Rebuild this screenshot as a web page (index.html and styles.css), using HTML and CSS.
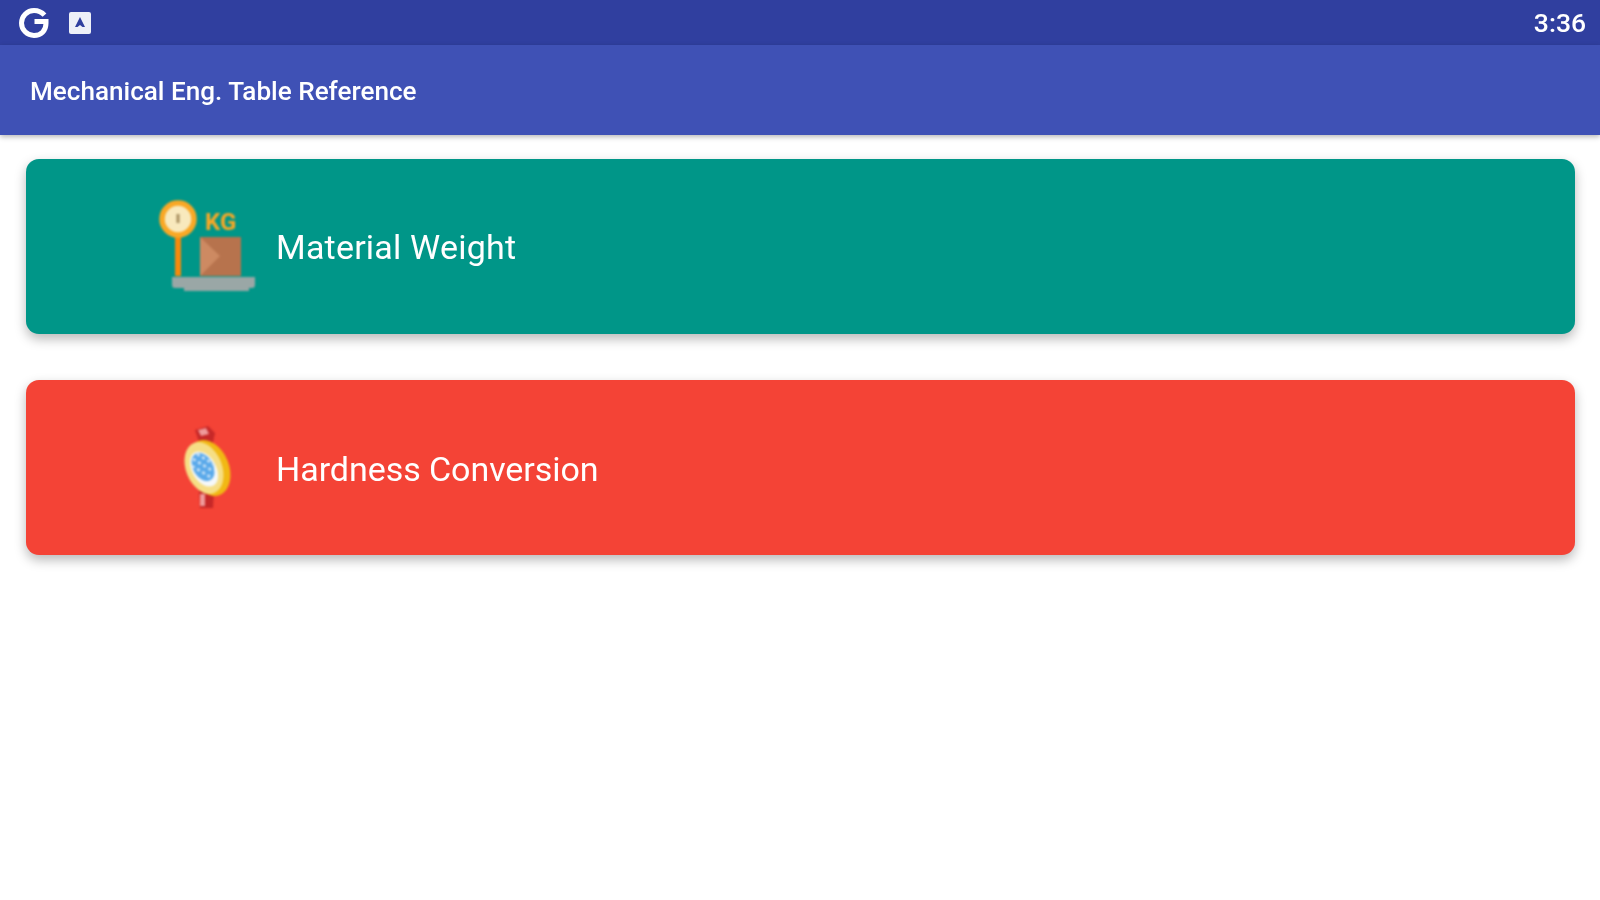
FILE: index.html
```html
<!DOCTYPE html>
<html lang="en">
<head>
<meta charset="utf-8">
<title>Mechanical Eng. Table Reference</title>
<link rel="stylesheet" href="styles.css">
</head>
<body>
<header class="status-bar">
  <div class="status-icons">
    <svg class="icon-g" viewBox="0 0 32 32" width="32" height="32"><path d="M26.500 8.200A14 14 0 0 0 16 3.500a12.500 12.500 0 1 0 0 25c7 0 12-4.800 12-12.200v-1.800H16.500" fill="none" stroke="#fff" stroke-width="5"/></svg>
    <svg class="icon-a" viewBox="0 0 24 24" width="24" height="24"><path fill="#eef0f8" fill-rule="evenodd" d="M3 1h18a2 2 0 0 1 2 2v18a2 2 0 0 1-2 2H3a2 2 0 0 1-2-2V3a2 2 0 0 1 2-2zM12 6l-5 10h2.500l2.500-2 2.500 2H17z"/></svg>
  </div>
  <span class="clock">3:36</span>
</header>
<div class="app-bar"><h1 class="app-title">Mechanical Eng. Table Reference</h1></div>
<main class="menu">
  <a class="card card-teal">
    <svg class="card-icon" viewBox="0 0 100 100" width="100" height="100">
      <rect x="19" y="38" width="6" height="41" fill="#f58a0c"/>
      <circle cx="22" cy="22" r="16" fill="#f8e9bd" stroke="#f9a825" stroke-width="5.500"/>
      <rect x="20.500" y="17" width="3" height="9" fill="#a89060"/>
      <rect x="44" y="40" width="41" height="39" fill="#b7734d"/>
      <path d="M44 40l20 19-20 20z" fill="#cd8a62"/>
      <path d="M16 80h83v8q0 3-3 3h-3v3H28v-3h-9q-3 0-3-3z" fill="#9aa7a6"/>
      <text x="49" y="33" class="kg">KG</text>
    </svg>
    <span class="card-label card-label-wide">Material Weight</span>
  </a>
  <a class="card card-red">
    <svg class="card-icon" viewBox="0 0 100 100" width="100" height="100">
      <path d="M39 12l13-4 7 7-3 14-11 1z" fill="#c62828"/>
      <path d="M42 12l8-2 3 6-8 2z" fill="#ef9a9a"/>
      <path d="M43 72h15l-1 18H44z" fill="#c62828"/>
      <path d="M44 76h5v12h-5z" fill="#ef9a9a"/>
      <ellipse cx="53" cy="50" rx="20" ry="29" transform="rotate(-22 53 50)" fill="#f1b814"/>
      <ellipse cx="48" cy="50" rx="18" ry="27" transform="rotate(-22 48 50)" fill="#f6de85"/>
      <ellipse cx="48" cy="51" rx="12" ry="19" transform="rotate(-30 48 51)" fill="#f5f8fa"/>
      <ellipse cx="47" cy="49" rx="10" ry="15" transform="rotate(-30 47 49)" fill="#5aa9ea"/>
      <path d="M37 41l20 12M36 48l20 12M41 36l18 11" stroke="#d5e9f8" stroke-width="2.500" stroke-dasharray="3 3"/>
    </svg>
    <span class="card-label">Hardness Conversion</span>
  </a>
</main>
</body>
</html>
```
FILE: styles.css
```css
* { box-sizing: border-box; }
html, body { margin: 0; height: 100%; }
body { background: #fff; font-family: Roboto, "Liberation Sans", sans-serif; color: #fff; overflow: hidden; }
.status-bar { height: 45px; background: #303f9f; display: flex; align-items: center; justify-content: space-between; padding: 0 14px 0 18px; }
.status-icons { display: flex; align-items: center; gap: 18px; }
.icon-g, .icon-a { filter: blur(0.6px); display: block; }
.clock { font-size: 26.5px; font-weight: 500; filter: blur(0.7px); }
.app-bar { height: 90px; background: #3f51b5; display: flex; align-items: center; padding: 0 30px; box-shadow: 0 2px 5px rgba(0,0,0,.28); position: relative; }
.app-title { margin: 2px 0 0; font-size: 26.1px; font-weight: 500; filter: blur(0.6px); }
.menu { display: flex; flex-direction: column; gap: 46px; padding: 24px 25px 0 26px; }
.card { height: 175px; border-radius: 13px; display: flex; align-items: center; padding-left: 130px; gap: 20px; box-shadow: 0 5px 12px rgba(0,0,0,.28); }
.card-teal { background: #009688; }
.card-red { background: #f44336; }
.card-icon { display: block; flex: none; filter: blur(0.8px); }
.kg { font: 700 24px Roboto, sans-serif; fill: #f9a825; }
.card-label { font-size: 34px; filter: blur(0.5px); }
.card-label-wide { letter-spacing: 0.2px; }
.card-red .card-label { padding-top: 2px; letter-spacing: -0.05px; }
```
